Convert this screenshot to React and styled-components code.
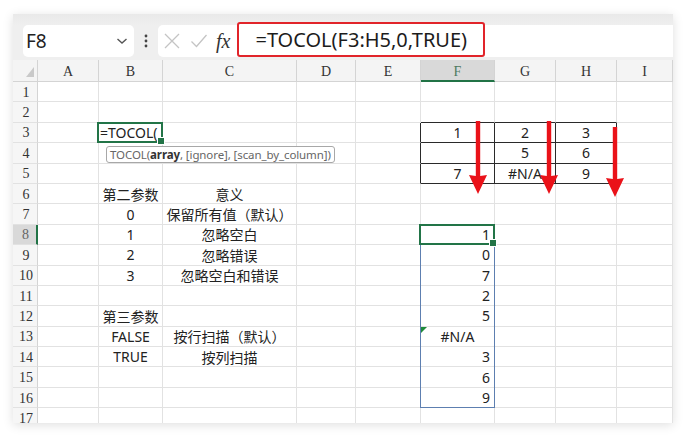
import React from 'react'
import styled, { createGlobalStyle } from 'styled-components'

const GlobalStyle = createGlobalStyle`
    html, body {
        margin: 0;
        padding: 0;
        background: #ffffff;
    }
    body {
        font-family: "Noto Sans", "Noto Sans CJK SC", sans-serif;
    }
    * {
        box-sizing: border-box;
    }
`

const COLS = ['A', 'B', 'C', 'D', 'E', 'F', 'G', 'H', 'I']
const COL_WIDTHS = [61, 64, 134, 59, 65, 74, 61, 61, 56]
const ROWS = Array.from({ length: 17 }, (_, i) => i + 1)

// cell contents, a = alignment (center by default)
const DATA = {
    B3: { v: '=TOCOL(', a: 'left' },
    F3: { v: '1' },
    G3: { v: '2' },
    H3: { v: '3' },
    G4: { v: '5' },
    H4: { v: '6' },
    F5: { v: '7' },
    G5: { v: '#N/A' },
    H5: { v: '9' },
    B6: { v: '第二参数' },
    C6: { v: '意义' },
    B7: { v: '0' },
    C7: { v: '保留所有值（默认）' },
    B8: { v: '1' },
    C8: { v: '忽略空白' },
    F8: { v: '1', a: 'right' },
    B9: { v: '2' },
    C9: { v: '忽略错误' },
    F9: { v: '0', a: 'right' },
    B10: { v: '3' },
    C10: { v: '忽略空白和错误' },
    F10: { v: '7', a: 'right' },
    F11: { v: '2', a: 'right' },
    B12: { v: '第三参数' },
    F12: { v: '5', a: 'right' },
    B13: { v: 'FALSE' },
    C13: { v: '按行扫描（默认）' },
    F13: { v: '#N/A', flag: true },
    B14: { v: 'TRUE' },
    C14: { v: '按列扫描' },
    F14: { v: '3', a: 'right' },
    F15: { v: '6', a: 'right' },
    F16: { v: '9', a: 'right' },
}

const ARROWS = [
    { x: 465, top: 61, base: 116, tip: 134 },
    { x: 536, top: 61, base: 116, tip: 134 },
    { x: 602, top: 67, base: 119, tip: 137 },
]

function App() {
    return (
        <Page>
            <GlobalStyle />
            <Card>
                <Toolbar>
                    <NameBox>
                        <span>F8</span>
                        <svg width="12" height="8" viewBox="0 0 12 8">
                            <polyline
                                points="1.5,2 6,6 10.5,2"
                                fill="none"
                                stroke="#555"
                                strokeWidth="1.4"
                            />
                        </svg>
                    </NameBox>
                    <Dots>
                        <svg width="4" height="14" viewBox="0 0 4 14">
                            <circle cx="2" cy="2" r="1.4" fill="#444" />
                            <circle cx="2" cy="7" r="1.4" fill="#444" />
                            <circle cx="2" cy="12" r="1.4" fill="#444" />
                        </svg>
                    </Dots>
                    <FormulaBar>
                        <ToolIcon>
                            <svg width="18" height="18" viewBox="0 0 18 18">
                                <path
                                    d="M2 2 L16 16 M16 2 L2 16"
                                    stroke="#c4c4c4"
                                    strokeWidth="1.3"
                                    fill="none"
                                />
                            </svg>
                        </ToolIcon>
                        <ToolIcon>
                            <svg width="18" height="18" viewBox="0 0 18 18">
                                <polyline
                                    points="1.5,9.5 6.5,14.5 16.5,3"
                                    stroke="#c4c4c4"
                                    strokeWidth="1.3"
                                    fill="none"
                                />
                            </svg>
                        </ToolIcon>
                        <Fx>fx</Fx>
                        <FormulaInput>=TOCOL(F3:H5,0,TRUE)</FormulaInput>
                    </FormulaBar>
                </Toolbar>

                <Sheet>
                    <Corner />
                    {COLS.map((c) => (
                        <ColHead key={c} $active={c === 'F'}>
                            {c}
                        </ColHead>
                    ))}
                    {ROWS.map((r) => (
                        <React.Fragment key={r}>
                            <RowHead $active={r === 8}>{r}</RowHead>
                            {COLS.map((c, ci) => {
                                const d = DATA[c + r]
                                return (
                                    <Cell
                                        key={c + r}
                                        $align={d ? d.a : undefined}
                                        $flag={d && d.flag}
                                        $darkRight={ci >= 4 && ci <= 7 && r >= 3 && r <= 5}
                                        $darkBottom={ci >= 5 && ci <= 7 && r >= 2 && r <= 5}
                                    >
                                        {d ? d.v : ''}
                                    </Cell>
                                )
                            })}
                        </React.Fragment>
                    ))}

                    <Range $col="7 / 8" $row="9 / 18" />
                    <Selection $col="3 / 4" $row="4 / 5" />
                    <Selection $col="7 / 8" $row="9 / 10" />

                    <Hint>
                        TOCOL(<b>array</b>, [ignore], [scan_by_column])
                    </Hint>

                    <Arrows viewBox="0 0 660 363">
                        {ARROWS.map((a, i) => (
                            <polygon
                                key={i}
                                fill="#ea1219"
                                points={`${a.x - 2.2},${a.top} ${a.x + 2.2},${a.top} ${a.x + 2.2},${a.base} ${a.x + 9},${a.base - 1} ${a.x},${a.tip} ${a.x - 9},${a.base - 1} ${a.x - 2.2},${a.base}`}
                            />
                        ))}
                    </Arrows>
                </Sheet>
            </Card>
        </Page>
    )
}

const Page = styled.div`
    width: 686px;
    height: 441px;
    padding: 14px 13px 0;
    background: #ffffff;
`

const Card = styled.div`
    width: 660px;
    height: 409px;
    display: flex;
    flex-direction: column;
    overflow: hidden;
    background: #ffffff;
    box-shadow: 0 2px 10px rgba(0, 0, 0, 0.13);
`

const Toolbar = styled.div`
    height: 46px;
    flex-shrink: 0;
    display: flex;
    align-items: flex-end;
    padding: 0 0 3px 10px;
    background: linear-gradient(#e9e9e9, #efefef 25%);
`

const NameBox = styled.div`
    width: 111px;
    height: 32px;
    display: flex;
    align-items: center;
    justify-content: space-between;
    padding: 0 6px 0 3px;
    background: #ffffff;
    border-radius: 5px;
    font-size: 19px;
    color: #222;
`

const Dots = styled.div`
    width: 24px;
    height: 32px;
    display: flex;
    align-items: center;
    justify-content: center;
`

const FormulaBar = styled.div`
    flex: 1;
    height: 32px;
    display: flex;
    align-items: flex-end;
    gap: 9px;
    padding-left: 5px;
    background: #ffffff;
    border-radius: 5px 0 0 5px;
`

const ToolIcon = styled.span`
    align-self: center;
    display: flex;
    width: 18px;
    height: 18px;
`

const Fx = styled.span`
    align-self: center;
    margin-left: -1px;
    font-family: "Liberation Serif", serif;
    font-style: italic;
    font-size: 20px;
    line-height: 1;
    color: #333;
`

const FormulaInput = styled.div`
    width: 248px;
    height: 35px;
    margin-left: -2px;
    display: flex;
    align-items: center;
    padding-left: 16px;
    border: 2px solid #e1242a;
    border-radius: 3px;
    background: #ffffff;
    font-size: 20px;
    color: #1c1c1c;
    white-space: nowrap;
`

const Sheet = styled.div`
    position: relative;
    flex: 1;
    display: grid;
    grid-template-columns: 25px ${COL_WIDTHS.map((w) => w + 'px').join(' ')};
    grid-template-rows: 22px repeat(17, 20.4px);
    overflow: hidden;
`

const Corner = styled.div`
    position: relative;
    background: #f4f4f4;
    border-right: 1px solid #d4d4d4;
    border-bottom: 1px solid #d4d4d4;

    &::after {
        content: '';
        position: absolute;
        right: 3px;
        bottom: 4px;
        border-left: 8px solid transparent;
        border-bottom: 10px solid #c9c9c9;
    }
`

const ColHead = styled.div`
    display: flex;
    align-items: center;
    justify-content: center;
    padding-top: 3px;
    background: ${(p) => (p.$active ? '#d9d9d9' : '#f4f4f4')};
    border-right: 1px solid #d4d4d4;
    border-bottom: ${(p) => (p.$active ? '2px solid #217346' : '1px solid #d4d4d4')};
    font-family: "Liberation Serif", serif;
    font-size: 14px;
    color: ${(p) => (p.$active ? '#4f7a5f' : '#333')};
`

const RowHead = styled.div`
    display: flex;
    align-items: center;
    justify-content: center;
    padding: 2px 0 0 2px;
    background: ${(p) => (p.$active ? '#d9d9d9' : '#f6f6f6')};
    border-right: ${(p) => (p.$active ? '2px solid #217346' : '1px solid #d4d4d4')};
    border-bottom: 1px solid #e2e2e2;
    font-family: "Liberation Serif", serif;
    font-size: 14px;
    color: ${(p) => (p.$active ? '#666' : '#333')};
`

const Cell = styled.div`
    position: relative;
    display: flex;
    align-items: center;
    justify-content: ${(p) =>
        p.$align === 'left' ? 'flex-start' : p.$align === 'right' ? 'flex-end' : 'center'};
    padding: 0 ${(p) => (p.$align === 'left' ? '1px' : '4px')};
    border-right: 1px solid ${(p) => (p.$darkRight ? '#2a2a2a' : '#e2e2e2')};
    border-bottom: 1px solid ${(p) => (p.$darkBottom ? '#2a2a2a' : '#e2e2e2')};
    font-size: 14px;
    color: #222;
    white-space: nowrap;

    &::before {
        content: '';
        display: ${(p) => (p.$flag ? 'block' : 'none')};
        position: absolute;
        left: 0;
        top: 0;
        border-top: 6px solid #1f8a3a;
        border-right: 6px solid transparent;
    }
`

const Range = styled.div`
    position: absolute;
    grid-column: ${(p) => p.$col};
    grid-row: ${(p) => p.$row};
    top: -1px;
    left: -1px;
    right: 0;
    bottom: 0;
    border: 1px solid #5d7fb0;
    pointer-events: none;
`

const Selection = styled.div`
    position: absolute;
    grid-column: ${(p) => p.$col};
    grid-row: ${(p) => p.$row};
    top: -1px;
    left: -2px;
    right: 0;
    bottom: 0;
    border: 2px solid #227447;
    pointer-events: none;

    &::after {
        content: '';
        position: absolute;
        right: -4px;
        bottom: -4px;
        width: 6px;
        height: 6px;
        background: #227447;
        border: 1px solid #ffffff;
    }
`

const Hint = styled.div`
    position: absolute;
    grid-column: 3 / 8;
    grid-row: 5 / 6;
    top: 3px;
    left: 7px;
    height: 17px;
    display: flex;
    align-items: center;
    padding: 0 3px;
    background: #ffffff;
    border: 1px solid #a8a8a8;
    border-radius: 3px;
    font-size: 11.5px;
    letter-spacing: -0.1px;
    color: #666;
    white-space: nowrap;

    b {
        color: #333;
        font-weight: 700;
    }
`

const Arrows = styled.svg`
    position: absolute;
    top: 0;
    left: 0;
    width: 660px;
    height: 363px;
    pointer-events: none;
`

export default App
